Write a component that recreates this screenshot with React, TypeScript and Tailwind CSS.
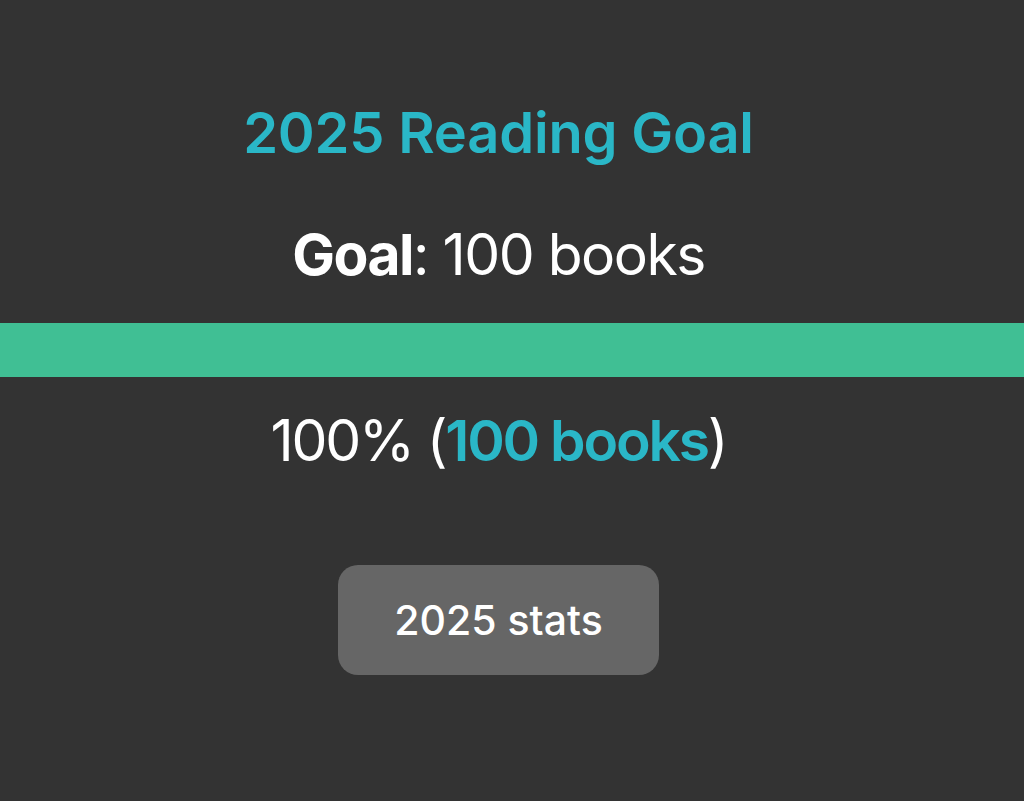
export default function App() {
  return (
    <div
      className="w-full h-[801px] bg-[#333333] flex flex-col items-center overflow-hidden"
      style={{ fontFamily: "Inter, 'Noto Sans', sans-serif" }}
    >
      <h1 className="mt-[105px] mr-[27px] text-[56px] leading-none font-semibold tracking-[-0.2px] text-[#2ab7c7]">
        2025 Reading Goal
      </h1>
      <p className="mt-[65px] mr-[27px] text-[57px] leading-none font-normal tracking-[-1.5px] text-white">
        <span className="font-bold">Goal</span>: 100 books
      </p>
      <div className="mt-[40px] w-full h-[54px] bg-[#40bf94]" />
      <p className="mt-[35px] mr-[27px] text-[57px] leading-none font-normal tracking-[-2.2px] text-white">
        100% (<span className="font-semibold text-[#2ab7c7]">100 books</span>)
      </p>
      <button className="mt-[96px] mr-[27px] w-[321px] h-[110px] rounded-[20px] bg-[#666666] text-white text-[41px] font-medium leading-none">
        2025 stats
      </button>
    </div>
  );
}
